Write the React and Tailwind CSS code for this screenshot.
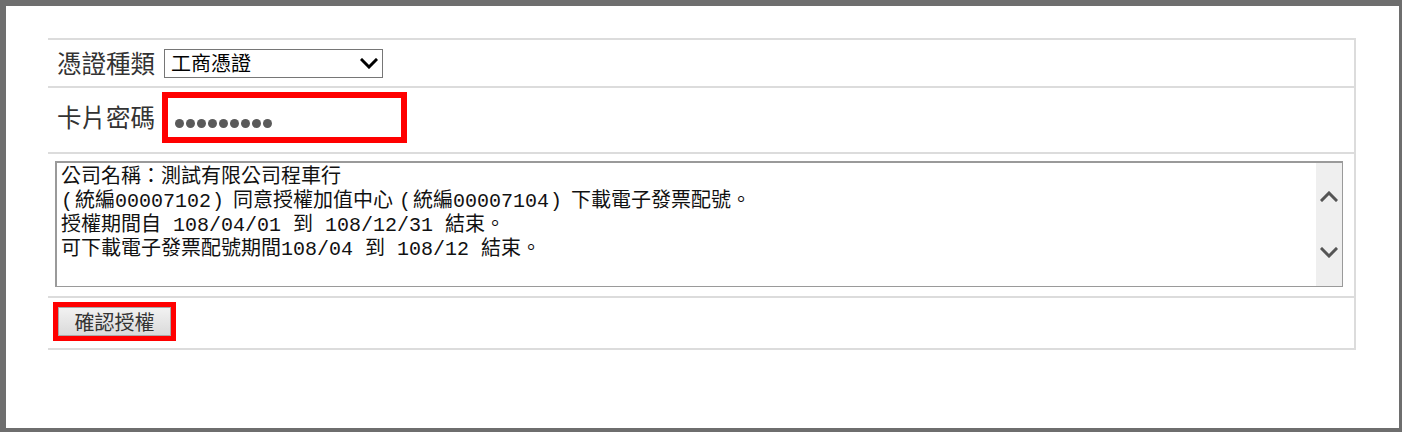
import React from "react";

const CJK = { fontFamily: '"Noto Sans CJK TC", "Noto Sans", sans-serif' };
const MONO = { fontFamily: '"Liberation Mono", "Noto Sans CJK TC", monospace' };

function Chevron({ dir = "down", className = "" }) {
  const d = dir === "down" ? "M2 2 L9 9 L16 2" : "M2 9 L9 2 L16 9";
  return (
    <svg width="18" height="11" viewBox="0 0 18 11" className={className}>
      <path d={d} fill="none" stroke="currentColor" strokeWidth="3" strokeLinecap="square" />
    </svg>
  );
}

function L({ first }) {
  return <span className={first ? "inline-block w-[14px] text-left" : "inline-block w-[20px] text-right pr-[2px]"}>(</span>;
}
function R() {
  return <span className="inline-block w-[22px] text-left pl-[1px]">)</span>;
}

export default function App() {
  return (
    <div className="w-[1402px] h-[432px] bg-white border-[#6e6e6e] border-l-[6px] border-t-[6px] border-r-[3px] border-b-[4px] overflow-hidden" style={CJK}>
      <div className="ml-[42px] mt-[32px] w-[1308px] border-t-2 border-r-2 border-[#dcdcdc]">
        {/* Row 1 */}
        <div className="h-[48px] border-b-2 border-[#dcdcdc] flex items-center pl-[9px]">
          <span className="text-[24.5px] leading-none text-[#333]">憑證種類</span>
          <div className="ml-[9px] w-[219px] h-[29px] border border-[#767676] bg-white flex items-center justify-between pl-[6px] pr-[4px]">
            <span className="text-[20px] leading-none text-black">工商憑證</span>
            <Chevron dir="down" className="text-black" />
          </div>
        </div>
        {/* Row 2 */}
        <div className="h-[66px] border-b-2 border-[#dcdcdc] flex items-start pl-[9px] pt-[4px]">
          <div className="h-[51px] flex items-center">
            <span className="text-[24.5px] leading-none text-[#333]">卡片密碼</span>
          </div>
          <div className="ml-[7px] w-[245px] h-[51px] border-[6px] border-[#ff0000] bg-white flex items-center pl-[7px] pt-[11px] gap-[2px]">
            {Array.from({ length: 9 }).map((_, i) => (
              <span key={i} className="w-[9px] h-[9px] rounded-full bg-[#5a5a5a]" />
            ))}
          </div>
        </div>
        {/* Row 3 */}
        <div className="h-[144px] border-b-2 border-[#dcdcdc] pt-[7px] pl-[7px] pr-[11px]">
          <div className="h-[126px] border-2 border-[#9a9a9a] border-r border-b flex bg-white">
            <div className="flex-1 pl-[4px] pt-[3px] text-[20px] leading-[24px] text-[#111] whitespace-pre" style={MONO}>
              <div>公司名稱：測試有限公司程車行</div>
              <div>
                <L first />統編00007102<R />同意授權加值中心<L />統編00007104<R />下載電子發票配號。
              </div>
              <div>授權期間自 108/04/01 到 108/12/31 結束。</div>
              <div>可下載電子發票配號期間108/04 到 108/12 結束。</div>
            </div>
            <div className="w-[26px] bg-[#efefef] flex flex-col items-center justify-center gap-[45px] text-[#555]">
              <Chevron dir="up" />
              <Chevron dir="down" />
            </div>
          </div>
        </div>
        {/* Row 4 */}
        <div className="h-[52px] border-b-2 border-[#dcdcdc] pt-[4px] pl-[5px]">
          <div className="w-[123px] h-[39px] border-[5px] border-[#ff0000] flex">
            <button className="flex-1 border border-[#a9a9a9] bg-gradient-to-b from-[#f2f2f2] to-[#dadada] text-[20px] leading-none text-[#333] flex items-center justify-center">
              確認授權
            </button>
          </div>
        </div>
      </div>
    </div>
  );
}
